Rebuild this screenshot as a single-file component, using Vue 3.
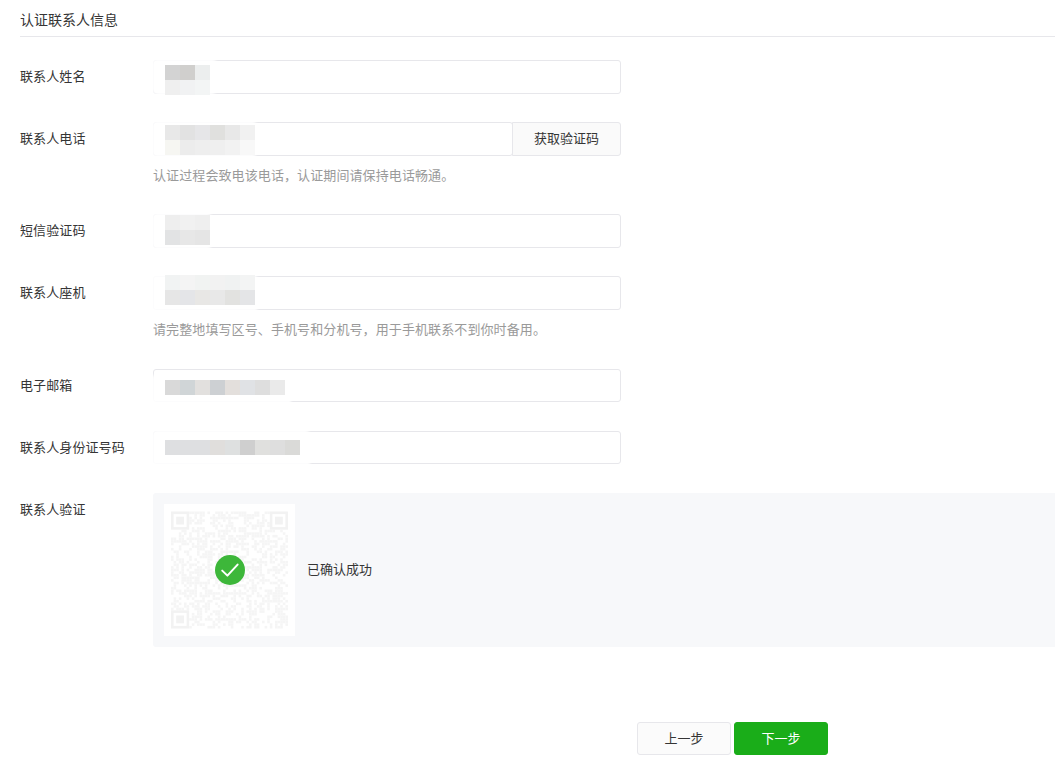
<script setup>
import { computed } from 'vue'

const COMMA = '\uFF0C'

const mosaics = {
  name: { top: 5, veil: 69, vt: -3, vb: -2, rows: [['#d3d3d3', '#d0cfcd', '#eceeee'], ['#efefef', '#f1f2f3', '#f3f5f5']] },
  phone: { top: 3, veil: 109, vt: -3, vb: -3, rows: [['#e8e8e8', '#e2e2e2', '#e6e6e8', '#e0e0de', '#e8e8e8', '#f1f1f1'], ['#f6f6f2', '#ececec', '#eeeeee', '#efefef', '#f2f2f2', '#f8f8f8']] },
  sms: { top: 1, veil: 64, vt: -3, vb: -3, rows: [['#eeeeee', '#f1f1f1', '#efefef'], ['#e2e3e4', '#e7e7e7', '#e5e5e5']] },
  landline: { top: -1, veil: 109, vt: -4, vb: -5, rows: [['#f1f3f3', '#f4f4f4', '#f1f3f2', '#f2f2f2', '#f0f2f2', '#f3f4f4'], ['#e6e6e6', '#e4e5e8', '#e8e7e5', '#e8e8e8', '#e2e2e0', '#e4e5e7']] },
  email: { top: 11, veil: 142, vt: 3, vb: -7, rows: [['#d9d9d9', '#d0d5d7', '#e2e0de', '#cdd0d3', '#e3dfdc', '#e0e2e5', '#dedede', '#eaeaea']] },
  id: { top: 9, veil: 162, vt: -3, vb: -5, rows: [['#dedfe1', '#dedfe1', '#dedfe1', '#e0dedc', '#dee0e0', '#cfcfcf', '#e0e0de', '#dedede', '#dadad8']] }
}

const fields = [
  { label: '联系人姓名', mosaic: mosaics.name },
  { label: '联系人电话', mosaic: mosaics.phone, action: '获取验证码', hint: '认证过程会致电该电话' + COMMA + '认证期间请保持电话畅通。' },
  { label: '短信验证码', mosaic: mosaics.sms },
  { label: '联系人座机', mosaic: mosaics.landline, hint: '请完整地填写区号、手机号和分机号' + COMMA + '用于手机联系不到你时备用。', loose: true },
  { label: '电子邮箱', mosaic: mosaics.email, short: true, loose: true },
  { label: '联系人身份证号码', mosaic: mosaics.id, short: true, loose: true }
]

const QR = 45
const modules = computed(() => {
  const out = []
  let seed = 20240517
  const rnd = () => {
    seed = (seed * 1664525 + 1013904223) >>> 0
    return seed / 4294967296
  }
  const inFinder = (x, y, ox, oy) => x >= ox && x < ox + 8 && y >= oy && y < oy + 8
  for (let y = 0; y < QR; y++) {
    for (let x = 0; x < QR; x++) {
      if (inFinder(x, y, -1, -1) || inFinder(x, y, QR - 7, -1) || inFinder(x, y, -1, QR - 7)) continue
      if (rnd() < 0.5) out.push({ x, y })
    }
  }
  return out
})
const finders = [[0, 0], [QR - 7, 0], [0, QR - 7]]
</script>

<template>
  <main class="page">
    <h2 class="title">认证联系人信息</h2>

    <form class="form" @submit.prevent>
      <div
        v-for="f in fields"
        :key="f.label"
        class="row"
        :class="{ loose: f.loose }"
      >
        <label class="label">{{ f.label }}</label>
        <div class="control">
          <div class="field" :class="{ short: f.short }">
            <div class="input-wrap">
              <input class="input" type="text" />
              <div
                class="veil"
                :style="{ width: f.mosaic.veil + 'px', top: f.mosaic.vt + 'px', bottom: f.mosaic.vb + 'px' }"
              ></div>
              <div class="mosaic" :style="{ top: f.mosaic.top + 'px' }">
                <div v-for="(r, i) in f.mosaic.rows" :key="i" class="mosaic-row">
                  <span
                    v-for="(c, j) in r"
                    :key="j"
                    class="cell"
                    :style="{ background: c }"
                  ></span>
                </div>
              </div>
            </div>
            <button v-if="f.action" type="button" class="addon">{{ f.action }}</button>
          </div>
          <p v-if="f.hint" class="hint">{{ f.hint }}</p>
        </div>
      </div>

      <div class="row last">
        <label class="label">联系人验证</label>
        <div class="panel">
          <div class="qr">
            <svg class="qr-code" :viewBox="`0 0 ${QR} ${QR}`">
              <rect
                v-for="(m, i) in modules"
                :key="i"
                :x="m.x"
                :y="m.y"
                width="1"
                height="1"
                fill="#f5f5f5"
              />
              <g v-for="(p, i) in finders" :key="'f' + i">
                <rect :x="p[0] + 0.5" :y="p[1] + 0.5" width="6" height="6" fill="none" stroke="#f2f2f2" stroke-width="1" />
                <rect :x="p[0] + 2" :y="p[1] + 2" width="3" height="3" fill="#f2f2f2" />
              </g>
            </svg>
            <svg class="ok" viewBox="0 0 30 30">
              <circle cx="15" cy="15" r="15" fill="#3db73a" />
              <path d="M7.2 15.6 L12.4 20.6 L22.6 9.6" fill="none" stroke="#fff" stroke-width="2" stroke-linecap="round" stroke-linejoin="round" />
            </svg>
          </div>
          <span class="status">已确认成功</span>
        </div>
      </div>

      <div class="actions">
        <button type="button" class="btn">上一步</button>
        <button type="submit" class="btn primary">下一步</button>
      </div>
    </form>
  </main>
</template>

<style>
html, body {
  margin: 0;
  background: #fff;
  overflow: hidden;
}
</style>

<style scoped>
.page {
  height: 765px;
  width: 1055px;
  padding: 9px 0 0 20px;
  box-sizing: border-box;
  font-family: "Noto Sans CJK SC", "Noto Sans", sans-serif;
  font-size: 13px;
  color: #353535;
  overflow: hidden;
}
.title {
  margin: 0;
  padding-bottom: 7px;
  font-size: 14px;
  font-weight: 400;
  line-height: 20px;
  border-bottom: 1px solid #e7e7eb;
}
.form {
  margin-top: 23px;
}
.row {
  display: flex;
  margin-bottom: 28px;
}
.row.loose {
  margin-bottom: 29px;
}
.row.last {
  margin-bottom: 75px;
}
.label {
  flex: none;
  width: 133px;
  line-height: 31px;
  letter-spacing: 0.1px;
  white-space: nowrap;
}
.control {
  width: 468px;
}
.field {
  display: flex;
  height: 34px;
}
.field.short {
  height: 33px;
}
.input-wrap {
  position: relative;
  flex: 1;
  min-width: 0;
}
.input {
  display: block;
  width: 100%;
  height: 100%;
  box-sizing: border-box;
  margin: 0;
  padding: 0 12px;
  border: 1px solid #e7e7eb;
  border-radius: 3px;
  background: #fff;
  outline: none;
}
.veil {
  position: absolute;
  left: -3px;
  background: rgba(255, 255, 255, 0.88);
  border-radius: 12px;
  filter: blur(1px);
}
.mosaic {
  position: absolute;
  left: 12px;
}
.mosaic-row {
  display: flex;
}
.cell {
  width: 15px;
  height: 15px;
}
.addon {
  flex: none;
  width: 109px;
  box-sizing: border-box;
  margin-left: -1px;
  border: 1px solid #e7e7eb;
  border-radius: 0 3px 3px 0;
  background: #fafafa;
  color: #353535;
  font: inherit;
  padding: 0 0 3px;
}
.hint {
  margin: 9px 0 0;
  padding-bottom: 1px;
  font-size: 13px;
  line-height: 20px;
  letter-spacing: 0.1px;
  color: #9a9a9a;
  white-space: nowrap;
}
.panel {
  flex: 1;
  display: flex;
  align-items: center;
  gap: 12px;
  height: 154px;
  box-sizing: border-box;
  padding: 11px;
  margin-right: -10px;
  background: #f7f8fa;
  border-radius: 3px;
}
.qr {
  position: relative;
  flex: none;
  width: 131px;
  height: 132px;
  background: #fff;
}
.qr-code {
  position: absolute;
  left: 7px;
  top: 7px;
  width: 117px;
  height: 118px;
}
.ok {
  position: absolute;
  left: 51px;
  top: 51px;
  width: 30px;
  height: 30px;
}
.status {
  line-height: 20px;
  margin-top: -2px;
}
.actions {
  display: flex;
  gap: 3px;
  margin-left: 617px;
}
.btn {
  width: 94px;
  height: 33px;
  box-sizing: border-box;
  padding: 0 0 2px;
  border: 1px solid #e7e7eb;
  border-radius: 3px;
  background: #fbfbfb;
  color: #353535;
  font: inherit;
}
.btn.primary {
  border-color: #1aad19;
  background: #1aad19;
  color: #fff;
}
</style>
